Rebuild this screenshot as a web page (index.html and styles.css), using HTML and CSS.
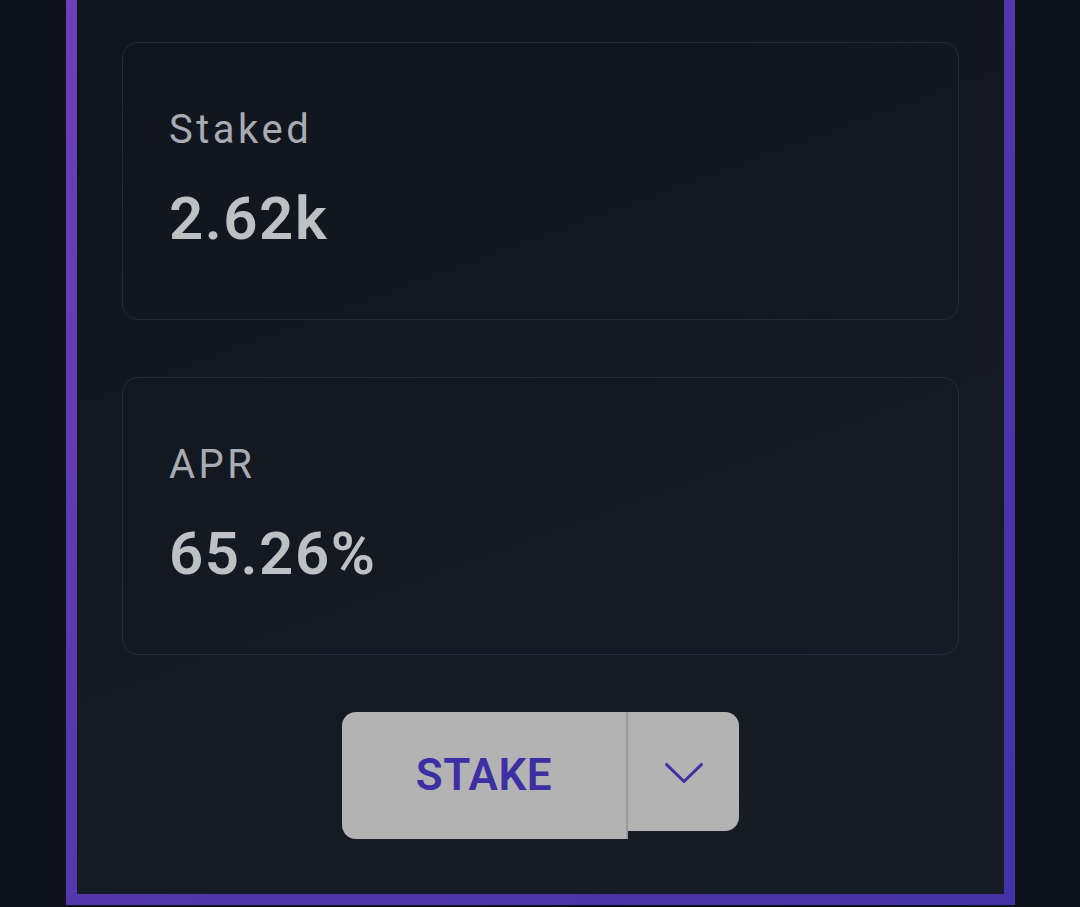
FILE: index.html
```html
<!DOCTYPE html>
<html lang="en">
<head>
<meta charset="utf-8">
<title>Stake</title>
<link rel="stylesheet" href="styles.css">
</head>
<body>
<div class="page">
  <section class="frame">
    <div class="card">
      <div class="label">Staked</div>
      <div class="value">2.62k</div>
    </div>
    <div class="card">
      <div class="label">APR</div>
      <div class="value">65.26%</div>
    </div>
    <div class="actions">
      <div class="btn-group">
        <button class="btn-main">STAKE</button>
        <button class="btn-toggle" aria-label="More options">
          <svg width="40" height="24" viewBox="0 0 40 24" fill="none">
            <path d="M2.5 3.5 L20 20.5 L37.5 3.5" stroke="#3b2fa3" stroke-width="3" stroke-linecap="round" stroke-linejoin="round"/>
          </svg>
        </button>
      </div>
    </div>
  </section>
</div>
</body>
</html>
```
FILE: styles.css
```css
html, body {
  margin: 0;
  padding: 0;
}
body {
  background: #0e121b;
  font-family: Roboto, "Liberation Sans", sans-serif;
  height: 907px;
  overflow: hidden;
}
.page {
  padding-left: 66px;
  width: 949px;
}
.frame {
  box-sizing: border-box;
  width: 949px;
  height: 905px;
  border-style: solid;
  border-width: 0 11px 11px 11px;
  border-image: linear-gradient(135deg, #6c3fb6 0%, #4f35aa 60%, #4532a6 100%) 1;
  background: linear-gradient(160deg, #10141d 0%, #141a23 60%, #171d26 100%);
  padding: 42px 45px 0 45px;
  display: flex;
  flex-direction: column;
  gap: 57px;
}
.card {
  box-sizing: border-box;
  height: 278px;
  border: 1px solid #252b36;
  border-radius: 16px;
  padding: 67px 46px 0 46px;
}
.label {
  font-size: 40px;
  line-height: 1;
  color: #a8acb2;
  letter-spacing: 3.5px;
}
.value {
  margin-top: 39px;
  font-size: 60px;
  line-height: 1;
  font-weight: 600;
  color: #bec0c4;
  letter-spacing: 1.5px;
}
.actions {
  display: flex;
  justify-content: center;
}
.btn-group {
  display: flex;
  align-items: flex-start;
}
.btn-main {
  box-sizing: border-box;
  width: 286px;
  height: 127px;
  border: none;
  border-right: 2px solid #999999;
  background: #b3b3b3;
  border-radius: 14px 0 0 14px;
  color: #3b2fa3;
  font-family: Roboto, "Liberation Sans", sans-serif;
  font-size: 44px;
  font-weight: 600;
  letter-spacing: 0.5px;
  padding: 0 0 2px 0;
}
.btn-toggle {
  width: 111px;
  height: 119px;
  border: none;
  background: #b3b3b3;
  border-radius: 0 14px 14px 0;
  padding: 0;
  display: flex;
  align-items: center;
  justify-content: center;
}
.btn-toggle svg {
  display: block;
  margin-top: 2px;
}
```
